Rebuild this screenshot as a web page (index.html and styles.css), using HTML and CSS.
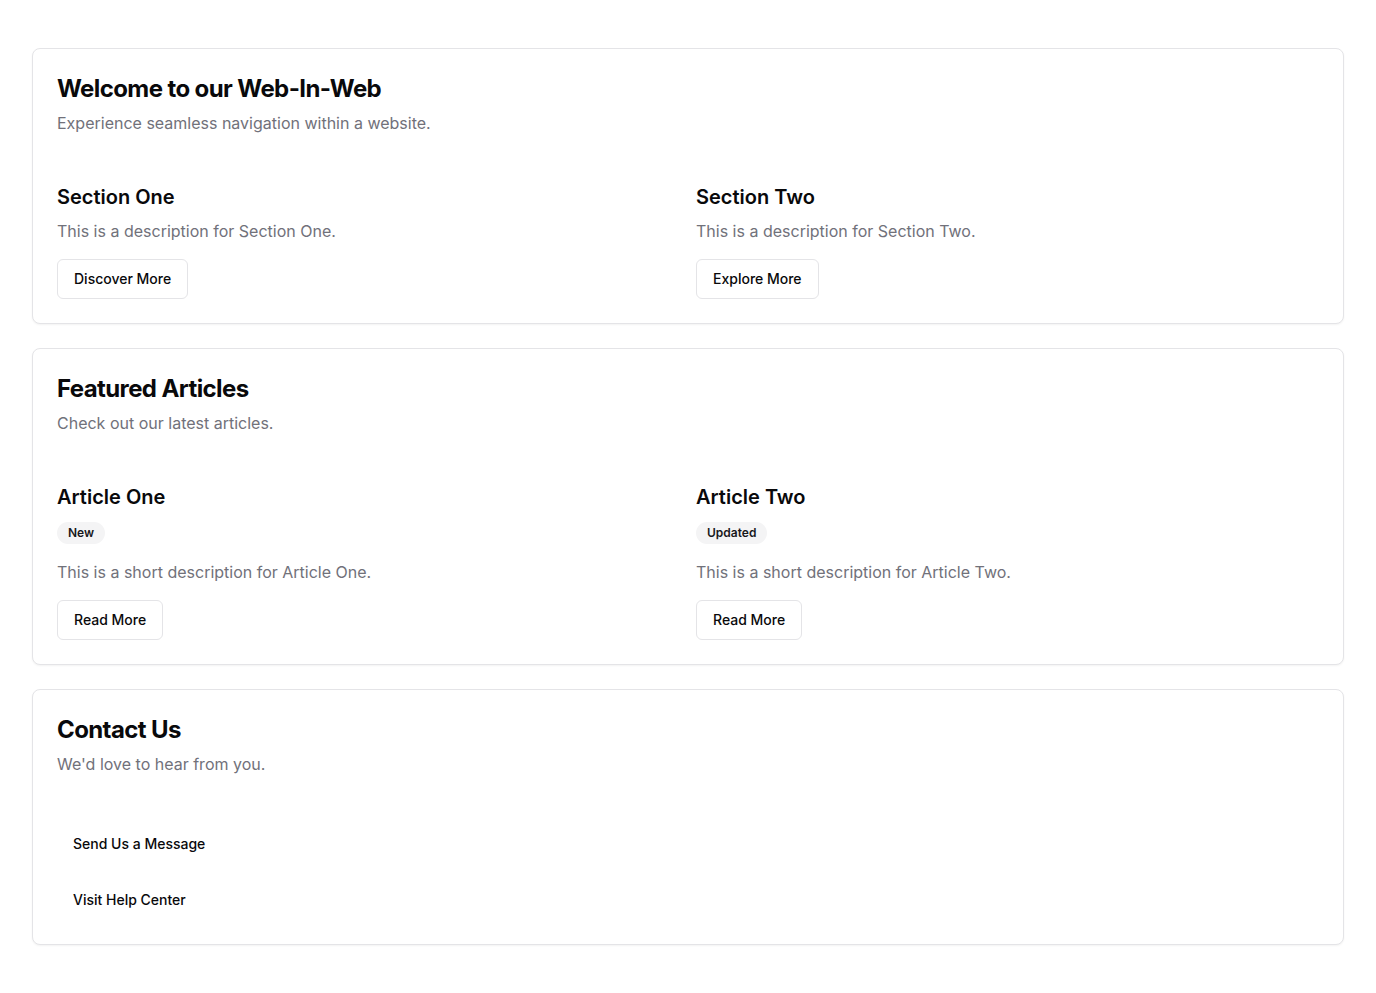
FILE: index.html
```html
<!DOCTYPE html>
<html lang="en">
<head>
<meta charset="utf-8">
<title>Web-In-Web</title>
<link rel="stylesheet" href="styles.css">
</head>
<body>
<main class="page">
  <section class="card">
    <header class="card-header">
      <h1 class="card-title">Welcome to our Web-In-Web</h1>
      <p class="card-desc">Experience seamless navigation within a website.</p>
    </header>
    <div class="card-content grid">
      <div class="item">
        <h2 class="item-title">Section One</h2>
        <p class="item-desc">This is a description for Section One.</p>
        <button class="btn btn-outline">Discover More</button>
      </div>
      <div class="item">
        <h2 class="item-title">Section Two</h2>
        <p class="item-desc">This is a description for Section Two.</p>
        <button class="btn btn-outline">Explore More</button>
      </div>
    </div>
  </section>

  <section class="card">
    <header class="card-header">
      <h1 class="card-title">Featured Articles</h1>
      <p class="card-desc">Check out our latest articles.</p>
    </header>
    <div class="card-content grid">
      <div class="item">
        <h2 class="item-title">Article One</h2>
        <div class="badge-row"><span class="badge">New</span></div>
        <p class="item-desc tall">This is a short description for Article One.</p>
        <button class="btn btn-outline">Read More</button>
      </div>
      <div class="item">
        <h2 class="item-title">Article Two</h2>
        <div class="badge-row"><span class="badge">Updated</span></div>
        <p class="item-desc tall">This is a short description for Article Two.</p>
        <button class="btn btn-outline">Read More</button>
      </div>
    </div>
  </section>

  <section class="card">
    <header class="card-header">
      <h1 class="card-title">Contact Us</h1>
      <p class="card-desc">We'd love to hear from you.</p>
    </header>
    <div class="card-content stack">
      <button class="btn btn-ghost">Send Us a Message</button>
      <button class="btn btn-ghost">Visit Help Center</button>
    </div>
  </section>
</main>
</body>
</html>
```

FILE: styles.css
```css
* { box-sizing: border-box; }
html, body { margin: 0; padding: 0; background: #ffffff; }
body {
  font-family: Inter, "Noto Sans", "Liberation Sans", sans-serif;
  color: #09090b;
}
.page {
  padding: 48px 32px;
  display: flex;
  flex-direction: column;
  gap: 24px;
}
.card {
  border: 1px solid #e4e4e7;
  border-radius: 8px;
  background: #fff;
  box-shadow: 0 1px 2px rgba(0,0,0,0.05);
}
.card-header {
  padding: 24px;
  display: flex;
  flex-direction: column;
  gap: 6px;
}
.card-title {
  margin: 0;
  font-size: 24px;
  line-height: 32px;
  font-weight: 700;
  letter-spacing: -0.6px;
}
.card-desc {
  margin: 0;
  font-size: 16px;
  line-height: 24px;
  color: #71717a;
}
.card-content {
  padding: 24px;
}
.grid {
  display: grid;
  grid-template-columns: 1fr 1fr;
  gap: 16px;
}
.item {
  display: flex;
  flex-direction: column;
  align-items: flex-start;
}
.item-title {
  margin: 0;
  font-size: 20px;
  line-height: 28px;
  font-weight: 600;
  letter-spacing: 0;
}
.item-desc {
  margin: 8px 0 16px;
  font-size: 16px;
  line-height: 24px;
  color: #71717a;
}
.item-desc.tall { margin-top: 16px; }
.badge-row { margin-top: 11px; display: flex; }
.badge {
  display: inline-flex;
  align-items: center;
  padding: 2px 10px;
  border: 1px solid transparent;
  border-radius: 9999px;
  background: #f4f4f5;
  font-size: 12px;
  line-height: 16px;
  font-weight: 600;
  color: #18181b;
}
.btn {
  font-family: inherit;
  font-size: 14px;
  font-weight: 500;
  line-height: 20px;
  height: 40px;
  padding: 0 16px;
  border-radius: 6px;
  color: #09090b;
  background: #fff;
  cursor: pointer;
  display: inline-flex;
  align-items: center;
}
.btn-outline {
  border: 1px solid #e4e4e7;
}
.btn-ghost {
  border: 0;
  background: transparent;
}
.stack {
  display: flex;
  flex-direction: column;
  align-items: flex-start;
  gap: 16px;
}
```
